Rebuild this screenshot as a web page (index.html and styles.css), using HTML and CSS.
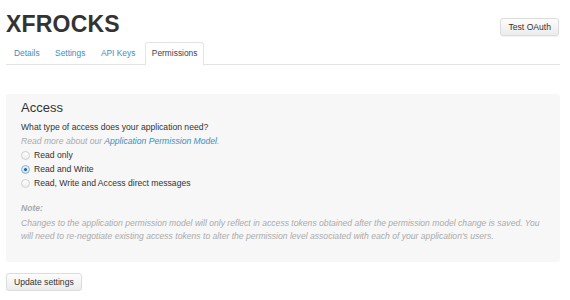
FILE: index.html
```html
<!DOCTYPE html>
<html lang="en">
<head>
  <meta charset="UTF-8" />
  <title>XFROCKS – Permissions</title>
  <link rel="stylesheet" href="styles.css">
</head>
<body>
  <div class="page">
    <header class="top">
      <h1>XFROCKS</h1>
      <button class="btn">Test OAuth</button>
    </header>

    <nav class="tabs">
      <a href="#">Details</a>
      <a href="#">Settings</a>
      <a href="#">API Keys</a>
      <a href="#" class="active">Permissions</a>
    </nav>

    <form class="panel">
      <h2>Access</h2>
      <p class="question">What type of access does your application need?</p>
      <p class="hint">Read more about our <a href="#">Application Permission Model</a>.</p>

      <label class="radio"><span class="dot"></span>Read only</label>
      <label class="radio"><span class="dot checked"></span>Read and Write</label>
      <label class="radio"><span class="dot"></span>Read, Write and Access direct messages</label>

      <div class="note">
        <strong>Note:</strong>
        <p>Changes to the application permission model will only reflect in access tokens obtained after the permission model change is saved. You will need to re-negotiate existing access tokens to alter the permission level associated with each of your application's users.</p>
      </div>
    </form>

    <button class="btn">Update settings</button>
  </div>
</body>
</html>
```

FILE: styles.css
```css
body {
  font-family: 'Liberation Sans', Arial, sans-serif;
  font-size: 8.6px;
  color: #333;
  background: #fff;
  margin: 0;
}

.page {
  padding: 0 10px 0 6px;
}

.top {
  display: flex;
  justify-content: space-between;
  align-items: flex-start;
  padding-top: 11px;
}

.top h1 {
  margin: 0;
  font-size: 23px;
  line-height: 26px;
  font-weight: bold;
  color: #333;
  letter-spacing: 0.2px;
}

.btn {
  font-family: inherit;
  font-size: 8.6px;
  color: #333;
  background: linear-gradient(#fdfdfd, #ececec);
  border: 1px solid #dcdcdc;
  border-radius: 3px;
  padding: 0 7px;
  height: 18px;
  line-height: 16px;
  box-shadow: 0 1px 1px rgba(0,0,0,0.06);
}

.top .btn {
  margin-top: 7px;
  margin-left: auto;
  margin-right: 1px;
}

.tabs {
  display: flex;
  margin-top: 5px;
  border-bottom: 1px solid #e4e4e4;
  height: 22px;
}

.tabs a {
  display: block;
  padding: 0 7.5px 0 8px;
  font-size: 8.4px;
  line-height: 22px;
  text-decoration: none;
  color: #3a8fc0;
}

.tabs a.active {
  color: #444;
  background: #fff;
  border: 1px solid #e4e4e4;
  border-bottom-color: #fff;
  border-radius: 3px 3px 0 0;
  height: 22px;
  line-height: 21px;
  padding: 0 6px;
  margin-left: 2px;
}

.panel {
  margin: 29px 0 11px;
  background: #f7f7f7;
  padding: 6px 15px 19px;
  border-radius: 3px;
}

.panel h2 {
  margin: 0 0 4px;
  font-size: 13px;
  font-weight: normal;
  line-height: 16px;
  color: #333;
}

.panel p {
  margin: 0;
  line-height: 14px;
}

.question {
  margin-bottom: 1px !important;
}

.hint {
  font-style: italic;
  color: #aaa;
  line-height: 13px !important;
}

.hint a {
  color: #3a8fc0;
  text-decoration: none;
}

.radio {
  display: flex;
  align-items: center;
  gap: 4px;
  line-height: 14px;
}

.dot {
  width: 7px;
  height: 7px;
  border-radius: 50%;
  border: 1px solid #cfcfcf;
  background: linear-gradient(#fff, #eee);
  position: relative;
}

.dot.checked {
  border-color: #8ab6d6;
  background: linear-gradient(#e3f0fa, #c6def0);
}

.dot.checked::after {
  content: "";
  position: absolute;
  left: 2px;
  top: 2px;
  width: 3px;
  height: 3px;
  border-radius: 50%;
  background: #2a5d85;
}

.note {
  margin-top: 11px;
  color: #aaa;
  font-style: italic;
}

.note strong {
  display: block;
  font-weight: bold;
  color: #aaa;
  line-height: 14px;
  margin-bottom: 2px;
}

.note p {
  line-height: 13px;
}
```
